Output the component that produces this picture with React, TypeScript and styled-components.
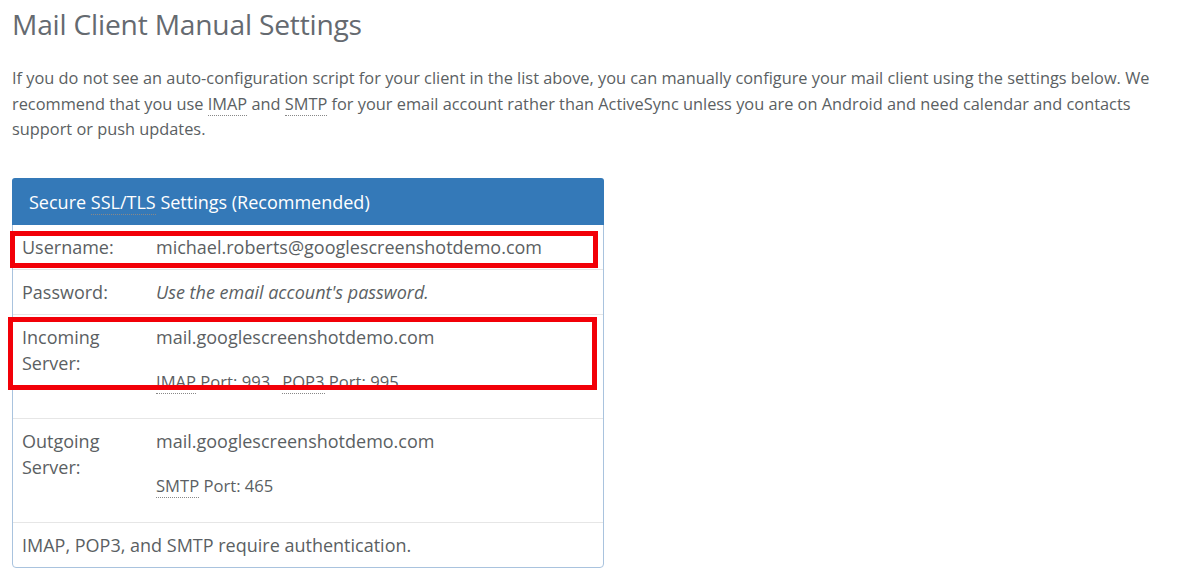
import React from 'react'
import styled, { createGlobalStyle } from 'styled-components'

const GlobalStyle = createGlobalStyle`
    body {
        margin: 0;
        background: #fff;
        font-family: "Open Sans", "Noto Sans", sans-serif;
        color: #5b5f63;
    }
`;

const Page = styled.div`
    padding: 0 12px;
`;

const Title = styled.h1`
    margin: 0;
    padding-top: 4px;
    font-size: 28.2px;
    font-weight: 400;
    line-height: 40px;
    color: #656a70;
    letter-spacing: -0.2px;
`;

const Intro = styled.p`
    margin: 22px 0 0;
    font-size: 16.35px;
    line-height: 25.5px;
    color: #5b5f63;
`;

const Abbr = styled.abbr`
    text-decoration: none;
    border-bottom: 1px dotted #888;
`;

const Panel = styled.div`
    margin-top: 35px;
    width: 590px;
    border: 1px solid #a9c3de;
    border-radius: 4px;
`;

const PanelHeading = styled.div`
    background: #3479b8;
    color: #fff;
    font-size: 18px;
    line-height: 26px;
    padding: 11px 17px 10px;
    border-radius: 3px 3px 0 0;
    margin: -1px -1px 0;
`;

const Row = styled.div<{ $first?: boolean }>`
    position: relative;
    display: grid;
    grid-template-columns: 134px 1fr;
    padding: 9px 9px;
    font-size: 18px;
    line-height: 26px;
    border-top: ${(p) => (p.$first ? 'none' : '1px solid #e6e6e6')};
`;

const Label = styled.div`
    color: #5b5f63;
`;

const Value = styled.div`
    color: #5b5f63;
`;

const Italic = styled.em`
    font-style: italic;
`;

const Ports = styled.div`
    margin: 22px 0 17px;
    font-size: 16.6px;
    line-height: 20px;
`;

const PortGap = styled.span`
    display: inline-block;
    width: 12px;
`;

const Footer = styled.div`
    padding: 9px 9px;
    font-size: 18px;
    line-height: 26px;
    border-top: 1px solid #e6e6e6;
`;

type BoxProps = { $top: number; $bottom: number; $left: number; $right: number };

const Highlight = styled.div<BoxProps>`
    position: absolute;
    top: ${(p) => p.$top}px;
    bottom: ${(p) => p.$bottom}px;
    left: ${(p) => p.$left}px;
    right: ${(p) => p.$right}px;
    border: 5px solid #f20008;
    pointer-events: none;
`;

const App: React.FC = () => {
    return (
        <Page>
            <GlobalStyle />
            <Title>Mail Client Manual Settings</Title>
            <Intro>
                If you do not see an auto-configuration script for your client in the list above, you can manually
                configure your mail client using the settings below. We recommend that you use <Abbr>IMAP</Abbr> and{' '}
                <Abbr>SMTP</Abbr> for your email account rather than ActiveSync unless you are on Android and need
                calendar and contacts support or push updates.
            </Intro>
            <Panel>
                <PanelHeading>
                    Secure <Abbr>SSL/TLS</Abbr> Settings (Recommended)
                </PanelHeading>
                <Row $first>
                    <Label>Username:</Label>
                    <Value>michael.roberts@googlescreenshotdemo.com</Value>
                    <Highlight $top={6} $bottom={1} $left={-3} $right={5} />
                </Row>
                <Row>
                    <Label>Password:</Label>
                    <Value>
                        <Italic>Use the email account's password.</Italic>
                    </Value>
                </Row>
                <Row>
                    <Label>
                        Incoming
                        <br />
                        Server:
                    </Label>
                    <Value>
                        mail.googlescreenshotdemo.com
                        <Ports>
                            <Abbr>IMAP</Abbr> Port: 993<PortGap /><Abbr>POP3</Abbr> Port: 995
                        </Ports>
                    </Value>
                    <Highlight $top={2} $bottom={28} $left={-5} $right={6} />
                </Row>
                <Row>
                    <Label>
                        Outgoing
                        <br />
                        Server:
                    </Label>
                    <Value>
                        mail.googlescreenshotdemo.com
                        <Ports>
                            <Abbr>SMTP</Abbr> Port: 465
                        </Ports>
                    </Value>
                </Row>
                <Footer>IMAP, POP3, and SMTP require authentication.</Footer>
            </Panel>
        </Page>
    )
}

export default App
